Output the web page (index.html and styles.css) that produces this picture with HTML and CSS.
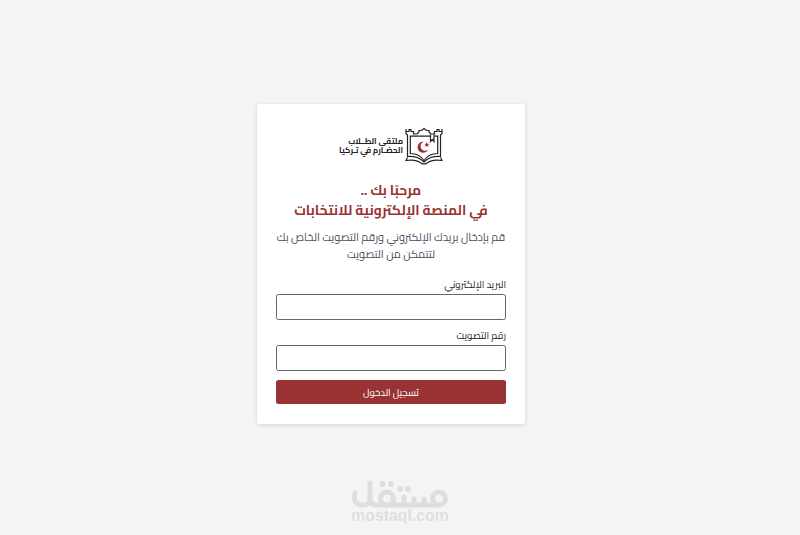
FILE: index.html
```html
<!DOCTYPE html>
<html lang="ar" dir="rtl">
<head>
  <meta charset="UTF-8" />
  <meta name="viewport" content="width=device-width, initial-scale=1.0"/>
  <title>تسجيل الدخول</title>
  <link rel="stylesheet" href="styles.css">
</head>
<body>
  <main class="card">
    <div class="logo">
      <svg class="logo-icon" viewBox="0 0 40 40" fill="none" stroke="#222" stroke-width="1.2">
        <path d="M3.500 31V9L2 7.500V3M2 5.500H5V3.500H7V5.500H9.500V8H13L15 6V4.500H17.500L20 2.500L22.500 4.500H25V6L27 8H30.500V5.500H33V3.500H35V5.500H38V3M38 5V7.500L36.500 9V31"/>
        <path d="M26 10.200H6.300V27.500C12 27.500 17 30 20 34.500C23 30 28 27.500 33.700 27.500V10.200H30.500"/>
        <path d="M3.500 30.500C10 30 16 32 20 36C24 32 30 30 36.500 30.500"/>
        <path d="M3.500 31.500L2 34.500C9 33.500 15 35 18 37.800H22C25 35 31 33.500 38 34.500L36.500 31.500"/>
        <path d="M26.500 8.500V15.500L28.300 13.500L30 15.500V8.500"/>
        <path d="M20 15.700A5.600 5.600 0 1 0 24.300 23.500A4.600 4.600 0 1 1 20 15.700Z" fill="#a12d32" stroke="none"/>
        <path d="M22.800 16L23.500 17.800L25.400 17.900L23.900 19.100L24.400 21L22.800 20L21.200 21L21.700 19.100L20.200 17.900L22.100 17.800Z" fill="#a12d32" stroke="none"/>
      </svg>
      <div class="logo-text">
        <span>ملتقى الطــلاب</span>
        <span>الحضـارم في تـركيا</span>
      </div>
    </div>

    <h1>مرحبًا بك ..<br>في المنصة الإلكترونية للانتخابات</h1>
    <p>قم بإدخال بريدك الإلكتروني ورقم التصويت الخاص بك<br>لتتمكن من التصويت</p>

    <form>
      <label for="email">البريد الإلكتروني</label>
      <input type="email" id="email">
      <label for="number">رقم التصويت</label>
      <input type="text" id="number">
      <button type="button">تسجيل الدخول</button>
    </form>
  </main>

  <div class="watermark">
    <svg viewBox="0 0 98 30" fill="none" stroke="#dcdee0" stroke-width="5" stroke-linecap="round" stroke-linejoin="round">
      <path d="M4 13C2 20 4 25 11 25C17 25 19 23 19 18V3"/>
      <path d="M19 18C19 23 21 25 25 25H88"/>
      <circle cx="36" cy="18.500" r="6.500"/>
      <path d="M42.500 19V25M53 17V25M63 19V25M73 19V25"/>
      <circle cx="88" cy="18.500" r="6.500"/>
      <g fill="#dcdee0" stroke="none">
        <circle cx="31.500" cy="4" r="3"/>
        <circle cx="40" cy="4" r="3"/>
        <circle cx="49" cy="9" r="3"/>
        <circle cx="57" cy="9" r="3"/>
      </g>
    </svg>
    <span>mostaql.com</span>
  </div>
</body>
</html>
```
FILE: styles.css
```css
:root {
  --accent: #993333;
  --bg: #f2f4f6;
  --text-primary: #1f2025;
  --text-secondary: #4a5060;
}

* {
  box-sizing: border-box;
  margin: 0;
  padding: 0;
}

body {
  font-family: "Cairo", "DejaVu Sans", sans-serif;
  background: var(--bg);
  color: var(--text-primary);
  height: 100vh;
  padding: 103.5px 18px 0 0;
  overflow: hidden;
}

.card {
  width: 268px;
  height: 320px;
  margin: 0 auto;
  padding: 22px 19px 19px;
  background: #fff;
  border-radius: 3px;
  box-shadow: 0 1px 4px rgba(0, 0, 0, 0.14);
}

.logo {
  display: flex;
  direction: ltr;
  flex-direction: row-reverse;
  justify-content: center;
  align-items: center;
  gap: 1px;
  height: 40px;
  padding-right: 1px;
}

.logo-icon {
  width: 40px;
  height: 40px;
}

.logo-text {
  display: flex;
  flex-direction: column;
  direction: rtl;
  width: 66px;
  padding-top: 1px;
  font-size: 8.15px;
  font-weight: bold;
  line-height: 9px;
  white-space: nowrap;
}

h1 {
  margin-top: 14px;
  color: var(--accent);
  font-size: 13.75px;
  line-height: 20px;
  text-align: center;
  white-space: nowrap;
}

p {
  margin-top: 9.5px;
  color: var(--text-secondary);
  font-size: 10.95px;
  line-height: 17px;
  text-align: center;
  white-space: nowrap;
}

form {
  display: flex;
  flex-direction: column;
  margin-top: 13.5px;
}

label {
  font-size: 9.7px;
  line-height: 16px;
  height: 16px;
}

input {
  width: 100%;
  height: 26px;
  margin: 1px 0 8.5px;
  border: 1px solid #65656a;
  border-radius: 2.5px;
  background: #fff;
}

button {
  height: 24.5px;
  border: none;
  border-radius: 2.5px;
  background: var(--accent);
  color: #fff;
  font-family: inherit;
  font-size: 9.6px;
  line-height: 24px;
}

.watermark {
  position: fixed;
  left: 351px;
  top: 480px;
  width: 98px;
  direction: ltr;
  color: #dcdee0;
  font: bold 15.8px/16px "Liberation Sans", sans-serif;
  text-align: center;
}

.watermark svg {
  display: block;
  width: 98px;
  height: 30px;
}

.watermark span {
  display: block;
  margin-top: -2px;
}
```
